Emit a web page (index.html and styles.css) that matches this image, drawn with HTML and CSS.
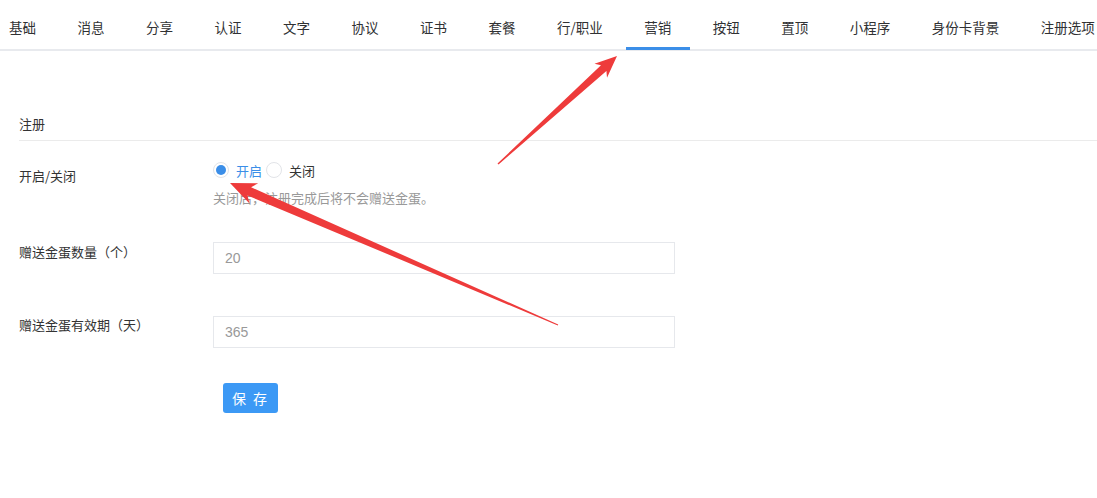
FILE: index.html
```html
<!DOCTYPE html>
<html lang="zh">
<head>
  <meta charset="UTF-8" />
  <title>营销设置</title>
  <link rel="stylesheet" href="styles.css">
</head>
<body>

  <!-- 顶部标签 -->
  <div class="tabs">
    <div class="tab first">基础</div>
    <div class="tab">消息</div>
    <div class="tab">分享</div>
    <div class="tab">认证</div>
    <div class="tab">文字</div>
    <div class="tab">协议</div>
    <div class="tab">证书</div>
    <div class="tab">套餐</div>
    <div class="tab">行/职业</div>
    <div class="tab active">营销</div>
    <div class="tab">按钮</div>
    <div class="tab">置顶</div>
    <div class="tab">小程序</div>
    <div class="tab">身份卡背景</div>
    <div class="tab">注册选项</div>
  </div>

  <div class="panel">
    <div class="section-title">注册</div>

    <div class="form-row row-switch">
      <div class="label">开启/关闭</div>
      <div class="field">
        <div class="radios">
          <span class="radio checked"></span><span class="radio-text on">开启</span>
          <span class="radio"></span><span class="radio-text">关闭</span>
        </div>
        <div class="hint">关闭后，注册完成后将不会赠送金蛋。</div>
      </div>
    </div>

    <div class="form-row row-count">
      <div class="label">赠送金蛋数量（个）</div>
      <div class="field">
        <div class="input">20</div>
      </div>
    </div>

    <div class="form-row row-days">
      <div class="label">赠送金蛋有效期（天）</div>
      <div class="field">
        <div class="input">365</div>
      </div>
    </div>

    <div class="form-row row-btn">
      <div class="label"></div>
      <div class="field">
        <button class="btn-save">保 存</button>
      </div>
    </div>
  </div>

  <!-- 标注箭头 -->
  <svg class="marks" width="1097" height="498" viewBox="0 0 1097 498">
    <polygon fill="#ee3b3b" points="497.5,163.5 601,65.2 594.5,63.8 617,56 607,77.8 606.4,71 498.5,164.5" />
    <polygon fill="#ee3b3b" points="558.2,324.5 251.1,187.2 258.2,183.2 230,183 249.5,203.4 247.5,195.4 557.8,325.5" />
  </svg>

</body>
</html>
```

FILE: styles.css
```css
* {
  margin: 0;
  padding: 0;
  box-sizing: border-box;
}

html, body {
  height: 100%;
  overflow: hidden;
}

body {
  background: #fff;
  color: #333;
  font-family: "Noto Sans CJK SC", "Liberation Sans", sans-serif;
  position: relative;
}

.tabs {
  display: flex;
  height: 51px;
  border-bottom: 2px solid #e8eaee;
  white-space: nowrap;
}

.tab {
  position: relative;
  padding: 5px 20.75px 0;
  line-height: 44px;
  font-size: 13.5px;
  color: #303133;
  flex-shrink: 0;
}

.tab.first {
  padding-left: 9px;
}

.tab.active::after {
  content: "";
  position: absolute;
  left: 2px;
  right: 2px;
  bottom: -1px;
  height: 3px;
  background: #3b8ee8;
}

.panel {
  padding-left: 19px;
}

.section-title {
  margin-top: 63px;
  font-size: 13px;
  line-height: 20px;
  padding-bottom: 6px;
  color: #333;
  border-bottom: 1px solid #ebebeb;
}

.form-row {
  display: flex;
}

.label {
  width: 194px;
  flex-shrink: 0;
  font-size: 13px;
  line-height: 20px;
  color: #333;
}

.row-switch {
  margin-top: 19px;
}

.row-switch .label {
  padding-top: 6px;
}

.radios {
  display: flex;
  align-items: center;
  height: 20px;
  font-size: 13px;
}

.radio {
  width: 16px;
  height: 16px;
  border-radius: 50%;
  border: 1px solid #e2e4e8;
  background: #fff;
  position: relative;
}

.radio.checked::after {
  content: "";
  position: absolute;
  left: 2px;
  top: 2px;
  width: 10px;
  height: 10px;
  border-radius: 50%;
  background: #3b8ee8;
}

.radio-text {
  margin: 0 4px 0 7px;
  color: #333;
}

.radio-text.on {
  color: #3b8ee8;
}

.hint {
  margin-top: 8px;
  font-size: 13px;
  line-height: 20px;
  color: #999;
}

.row-count {
  margin-top: 34px;
}

.row-days {
  margin-top: 42px;
}

.row-days .label {
  margin-top: -1px;
}

.input {
  width: 462px;
  height: 32px;
  border: 1px solid #e6e8ec;
  padding-left: 11px;
  font-family: "Liberation Sans", sans-serif;
  font-size: 14px;
  line-height: 30px;
  color: #999;
}

.row-btn {
  margin-top: 35px;
}

.btn-save {
  margin-left: 10px;
  width: 55px;
  height: 30px;
  border: none;
  border-radius: 3px;
  background: #3c99f5;
  color: #fff;
  font-family: "Noto Sans CJK SC", sans-serif;
  font-size: 14px;
  letter-spacing: 2px;
}

.marks {
  position: absolute;
  left: 0;
  top: 0;
  pointer-events: none;
}
```
